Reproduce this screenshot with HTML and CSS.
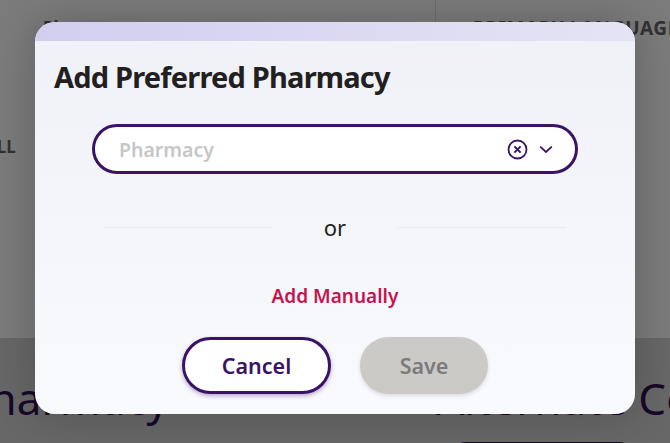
FILE: index.html
```html
<!DOCTYPE html>
<html lang="en">
<head>
<meta charset="utf-8">
<title>Add Preferred Pharmacy</title>
<link rel="stylesheet" href="styles.css">
</head>
<body>
<main class="page">
  <section class="info">
    <div class="info-col info-left">
      <div class="label label-p">Pl</div>
      <div class="label label-all">ALL</div>
    </div>
    <div class="info-col info-right">
      <div class="label label-lang">PRIMARY LANGUAGE</div>
    </div>
  </section>
  <section class="lower">
    <h2 class="lower-title lower-a">Pharmacy</h2>
    <div class="lower-right">
      <h2 class="lower-title">Alternate Contact</h2>
      <div class="lower-pill"></div>
    </div>
  </section>
</main>
<div class="scrim"></div>
<div class="modal" role="dialog" aria-label="Add Preferred Pharmacy">
  <div class="modal-band"></div>
  <div class="modal-body">
    <h1 class="modal-title">Add Preferred Pharmacy</h1>
    <div class="select">
      <span class="placeholder">Pharmacy</span>
      <svg class="icon-clear" width="21" height="21" viewBox="0 0 21 21" fill="none" stroke="#3b1366">
        <circle cx="10.5" cy="10.5" r="9" stroke-width="1.8"/>
        <path d="M7.4 7.4l6.2 6.2M13.6 7.4l-6.2 6.2" stroke-width="2"/>
      </svg>
      <svg class="icon-chev" width="14" height="9" viewBox="0 0 14 9" fill="none" stroke="#3b1366">
        <path d="M1.2 1.6L7 7l5.8-5.4" stroke-width="1.8"/>
      </svg>
    </div>
    <div class="divider">
      <span class="rule"></span>
      <span class="or">or</span>
      <span class="rule"></span>
    </div>
    <a class="manual" href="#">Add Manually</a>
    <div class="actions">
      <button class="btn btn-cancel" type="button">Cancel</button>
      <button class="btn btn-save" type="button">Save</button>
    </div>
  </div>
</div>
</body>
</html>
```
FILE: styles.css
```css
* { box-sizing: border-box; }
html, body { margin: 0; padding: 0; }
body {
  width: 670px;
  height: 443px;
  overflow: hidden;
  position: relative;
  font-family: "Noto Sans", "Open Sans", sans-serif;
  background: #fff;
}
.page { width: 670px; height: 443px; display: flex; flex-direction: column; }
.info { height: 338px; display: flex; background: #f6f6f6; }
.info-col { position: relative; }
.info-left { width: 436px; border-right: 1px solid #dcdcdc; padding-top: 17px; padding-left: 43px; }
.info-right { flex: 1; padding-top: 17px; padding-left: 37px; white-space: nowrap; overflow: hidden; }
.label { font-size: 17px; font-weight: 700; color: #636363; line-height: 22px; }
.label-all { margin: 97px 0 0 -58px; }
.label-lang { font-size: 19px; letter-spacing: .6px; }
.lower {
  flex: 1; display: flex; background: #cfcfcf; padding-top: 32px; overflow: hidden;
}
.lower-title { margin: 0; font-size: 44px; font-weight: 400; color: #2f1052; line-height: 56px; white-space: nowrap; }
.lower-a { margin-left: -37px; width: 473px; flex: none; }
.lower-right { white-space: nowrap; }
.lower-pill { width: 175px; height: 20px; margin: 16px 0 0 19px; border-radius: 10px 10px 0 0; background: #2f1052; }
.scrim { position: absolute; inset: 0; background: rgba(0,0,0,.5); }
.modal {
  position: absolute; left: 35px; top: 22px; width: 600px; height: 392px;
  border-radius: 20px; overflow: hidden;
  display: flex; flex-direction: column;
  background: linear-gradient(180deg, #eff1f8 0%, #f9fafd 100%);
  box-shadow: 0 0 40px rgba(0,0,0,.22);
}
.modal-band { height: 19px; flex: none; background: linear-gradient(90deg, #d1cef0 0%, #e4e4f5 100%); }
.modal-body { flex: 1; display: flex; flex-direction: column; align-items: center; }
.modal-title {
  align-self: flex-start; margin: 18px 0 0 19px;
  font-size: 29px; font-weight: 700; line-height: 36px; color: #231f20;
  letter-spacing: -.8px; white-space: nowrap;
}
.select {
  margin-top: 29px; width: 486px; height: 50px; flex: none;
  border: 3.5px solid #3b1366; border-radius: 25px; background: #fff;
  display: flex; align-items: center; padding: 0 22px 0 24px;
}
.placeholder { flex: 1; font-size: 19.5px; font-weight: 600; color: #c6c6c6; }
.icon-clear { margin-right: 11px; }
.divider { margin-top: 29px; width: 462px; display: flex; align-items: center; height: 48px; flex: none; }
.rule { flex: 1; height: 1px; background: #e9eaf3; }
.or { width: 124px; text-align: center; font-size: 22px; color: #231f20; line-height: 30px; }
.manual { margin-top: 32px; font-size: 19px; font-weight: 600; color: #c8134f; text-decoration: none; line-height: 26px; }
.actions { margin-top: 28px; display: flex; gap: 29px; }
.btn {
  height: 57px; border-radius: 29px; font-family: inherit; font-size: 21.5px; font-weight: 600; padding: 0;
}
.btn-cancel { width: 149px; background: #fff; color: #3b1366; border: 3.5px solid #3b1366; box-shadow: 0 2px 4px rgba(59,19,102,.35); }
.btn-save { width: 128px; background: #cccac6; color: #7b7b7b; border: 0; box-shadow: 0 2px 4px rgba(0,0,0,.12); }
```
